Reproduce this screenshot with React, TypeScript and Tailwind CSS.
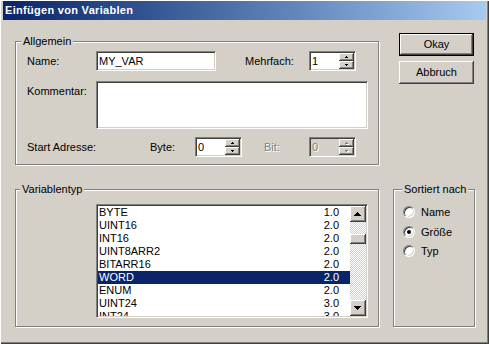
import React from "react";

const sunken =
  "border border-t-[#808080] border-l-[#808080] border-b-white border-r-white shadow-[inset_1px_1px_0_#404040,inset_-1px_-1px_0_#d4d0c8]";
const raised =
  "bg-[#d4d0c8] shadow-[inset_-1px_-1px_0_#404040,inset_1px_1px_0_#fff,inset_-2px_-2px_0_#808080]";
const etched = "relative border border-[#808080] shadow-[inset_1px_1px_0_#fff,1px_1px_0_#fff]";
const disabledText = "text-[#808080] [text-shadow:1px_1px_0_#fff]";

const ROWS: [string, string][] = [
  ["BYTE", "1.0"],
  ["UINT16", "2.0"],
  ["INT16", "2.0"],
  ["UINT8ARR2", "2.0"],
  ["BITARR16", "2.0"],
  ["WORD", "2.0"],
  ["ENUM", "2.0"],
  ["UINT24", "3.0"],
  ["INT24", "3.0"],
];

const Arrow = ({ up, big, disabled }: { up?: boolean; big?: boolean; disabled?: boolean }) => {
  const w = big ? 7 : 3;
  const rows = big ? 4 : 2;
  const rects = [];
  for (let i = 0; i < rows; i++) {
    const width = 1 + i * 2;
    const y = up ? i : rows - 1 - i;
    rects.push({ x: (w - width) / 2, y, width });
  }
  return (
    <svg width={w + 1} height={rows + 1} shapeRendering="crispEdges">
      {disabled &&
        rects.map((r, i) => <rect key={"s" + i} x={r.x + 1} y={r.y + 1} width={r.width} height={1} fill="#fff" />)}
      {rects.map((r, i) => (
        <rect key={i} x={r.x} y={r.y} width={r.width} height={1} fill={disabled ? "#808080" : "#000"} />
      ))}
    </svg>
  );
};

const Spinner = ({ value, disabled }: { value: string; disabled?: boolean }) => (
  <div className={`flex h-[20px] w-[47px] p-px ${sunken} ${disabled ? "bg-[#d4d0c8]" : "bg-white"}`}>
    <div className={`flex-1 pl-px leading-[16px] ${disabled ? disabledText : ""}`}>{value}</div>
    <div className="flex w-[15px] flex-col">
      <div className={`flex h-[8px] items-center justify-center pl-px ${raised}`}>
        <Arrow up disabled={disabled} />
      </div>
      <div className={`flex h-[8px] items-center justify-center pl-px ${raised}`}>
        <Arrow disabled={disabled} />
      </div>
    </div>
  </div>
);

const Radio = ({ label, checked }: { label: string; checked?: boolean }) => (
  <div className="flex h-[12px] items-center">
    <div
      className={`flex h-[12px] w-[12px] items-center justify-center rounded-full bg-white border border-t-[#808080] border-l-[#808080] border-b-white border-r-white shadow-[inset_1px_1px_0_#404040,inset_-1px_-1px_0_#d4d0c8]`}
    >
      {checked && <div className="h-[4px] w-[4px] rounded-full bg-black" />}
    </div>
    <span className="ml-[6px] leading-[13px]">{label}</span>
  </div>
);

const Legend = ({ children, left }: { children: React.ReactNode; left: string }) => (
  <span className={`absolute -top-[7px] bg-[#d4d0c8] px-[2px] leading-[13px] ${left}`}>{children}</span>
);

export default function App() {
  return (
    <div
      className="flex h-[344px] w-[489px] flex-col bg-[#d4d0c8] px-[3px] pt-px pb-[3px] text-[11px] leading-[13px] text-black shadow-[inset_1px_1px_0_#fff,inset_-1px_-1px_0_#404040,inset_-2px_-2px_0_#808080]"
      style={{ fontFamily: '"Liberation Sans", Arial, sans-serif' }}
    >
      {/* title bar */}
      <div className="flex h-[19px] items-center bg-gradient-to-r from-[#0a246a] to-[#a6caf0] pl-[2px]">
        <span className="text-[11px] font-bold tracking-[0.3px] text-white">Einfügen von Variablen</span>
      </div>

      <div className="flex flex-1 items-start pl-[12px] pt-[13px]">
        {/* left column */}
        <div className="mt-[8px] flex w-[364px] flex-col">
          <div className={`${etched} h-[124px] pl-[11px] pt-[9px]`}>
            <Legend left="left-[5px]">Allgemein</Legend>
            <div className="flex h-[20px] items-center">
              <span className="w-[69px] pt-px">Name:</span>
              <div className={`h-[20px] w-[120px] bg-white pl-[2px] leading-[18px] ${sunken}`}>MY_VAR</div>
              <span className="ml-[29px] w-[64px] pt-px">Mehrfach:</span>
              <Spinner value="1" />
            </div>
            <div className="mt-[10px] flex items-start">
              <span className="w-[69px] pt-[4px]">Kommentar:</span>
              <div className={`h-[48px] w-[272px] bg-white ${sunken}`} />
            </div>
            <div className="mt-[8px] flex h-[20px] items-center">
              <span className="w-[123px]">Start Adresse:</span>
              <span className="w-[45px]">Byte:</span>
              <Spinner value="0" />
              <span className={`ml-[22px] w-[45px] ${disabledText}`}>Bit:</span>
              <Spinner value="0" disabled />
            </div>
          </div>

          <div className={`${etched} mt-[24px] h-[138px] pl-[80px] pt-[14px]`}>
            <Legend left="left-[4px]">Variablentyp</Legend>
            <div className={`flex h-[114px] w-[272px] bg-white p-px ${sunken}`}>
              <div className="flex-1 overflow-hidden">
                {ROWS.map(([name, size]) => (
                  <div
                    key={name}
                    className={`flex h-[13px] justify-between pl-px pr-[11px] leading-[13px] ${
                      name === "WORD" ? "bg-[#0a246a] text-white" : ""
                    }`}
                  >
                    <span>{name}</span>
                    <span>{size}</span>
                  </div>
                ))}
              </div>
              <div className="flex w-[16px] flex-col bg-[repeating-conic-gradient(#d4d0c8_0_25%,#fff_0_50%)] bg-[length:2px_2px]">
                <div className={`flex h-[16px] items-center justify-center ${raised}`}>
                  <Arrow up big />
                </div>
                <div className={`mt-[12px] h-[10px] ${raised}`} />
                <div className="flex-1" />
                <div className={`flex h-[16px] items-center justify-center ${raised}`}>
                  <Arrow big />
                </div>
              </div>
            </div>
          </div>
        </div>

        {/* right column */}
        <div className="ml-[14px] flex w-[82px] flex-col">
          <button className="ml-[6px] flex h-[23px] w-[75px] border border-black bg-[#d4d0c8] p-0">
            <span className={`flex h-full w-full items-center justify-center ${raised}`}>Okay</span>
          </button>
          <button className={`ml-[6px] mt-[5px] flex h-[23px] w-[75px] items-center justify-center ${raised}`}>
            Abbruch
          </button>
          <div className={`${etched} mt-[105px] h-[138px] pl-[9px] pt-[16px]`}>
            <Legend left="left-[8px]">Sortiert nach</Legend>
            <div className="flex flex-col">
              <Radio label="Name" />
              <div className="mt-[8px]">
                <Radio label="Größe" checked />
              </div>
              <div className="mt-[7px]">
                <Radio label="Typ" />
              </div>
            </div>
          </div>
        </div>
      </div>
    </div>
  );
}
